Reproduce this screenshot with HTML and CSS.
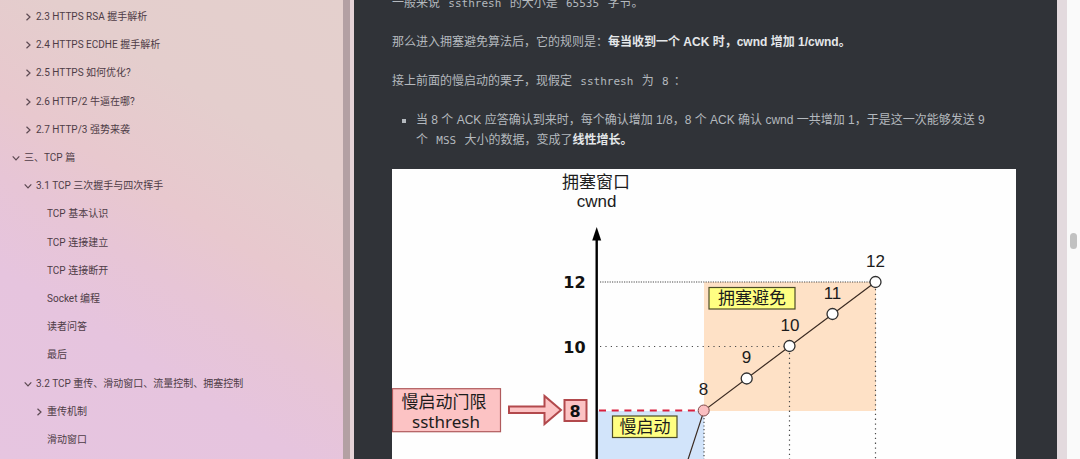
FILE: index.html
```html
<!DOCTYPE html>
<html lang="zh-CN">
<head>
<meta charset="utf-8">
<title>TCP 拥塞控制</title>
<link rel="stylesheet" href="styles.css">
</head>
<body>
<svg class="defs" aria-hidden="true">
  <symbol id="right" viewBox="0 0 8 8"><path d="M2.5 .7 6 4 2.5 7.3"/></symbol>
  <symbol id="down" viewBox="0 0 8 8"><path d="M.7 2.4 4 5.8 7.3 2.4"/></symbol>
</svg>
<div class="app">
  <nav class="outline" aria-label="目录">
    <ul class="tree">
      <li><a class="row l2" href="#"><svg class="chev"><use href="#right"/></svg>2.3 HTTPS RSA 握手解析</a></li>
      <li><a class="row l2" href="#"><svg class="chev"><use href="#right"/></svg>2.4 HTTPS ECDHE 握手解析</a></li>
      <li><a class="row l2" href="#"><svg class="chev"><use href="#right"/></svg>2.5 HTTPS 如何优化?</a></li>
      <li><a class="row l2" href="#"><svg class="chev"><use href="#right"/></svg>2.6 HTTP/2 牛逼在哪?</a></li>
      <li><a class="row l2" href="#"><svg class="chev"><use href="#right"/></svg>2.7 HTTP/3 强势来袭</a></li>
      <li><a class="row l1" href="#"><svg class="chev"><use href="#down"/></svg>三、TCP 篇</a></li>
      <li><a class="row l2" href="#"><svg class="chev"><use href="#down"/></svg>3.1 TCP 三次握手与四次挥手</a></li>
      <li><a class="row leaf" href="#">TCP 基本认识</a></li>
      <li><a class="row leaf" href="#">TCP 连接建立</a></li>
      <li><a class="row leaf" href="#">TCP 连接断开</a></li>
      <li><a class="row leaf" href="#">Socket 编程</a></li>
      <li><a class="row leaf" href="#">读者问答</a></li>
      <li><a class="row leaf" href="#">最后</a></li>
      <li><a class="row l2" href="#"><svg class="chev"><use href="#down"/></svg>3.2 TCP 重传、滑动窗口、流量控制、拥塞控制</a></li>
      <li><a class="row l3" href="#"><svg class="chev"><use href="#right"/></svg>重传机制</a></li>
      <li><a class="row leaf" href="#">滑动窗口</a></li>
    </ul>
  </nav>
  <div class="divider"></div>
  <main class="page">
    <article class="doc">
      <p>一般来说 <code>ssthresh</code> 的大小是 <code>65535</code> 字节。</p>
      <p>那么进入拥塞避免算法后，它的规则是：<strong>每当收到一个 ACK 时，cwnd 增加 1/cwnd。</strong></p>
      <p>接上前面的慢启动的栗子，现假定 <code>ssthresh</code> 为 <code>8</code>：</p>
      <ul class="points">
        <li>当 8 个 ACK 应答确认到来时，每个确认增加 1/8，8 个 ACK 确认 cwnd 一共增加 1，于是这一次能够发送 9 个 <code>MSS</code> 大小的数据，变成了<strong>线性增长。</strong></li>
      </ul>
      <svg class="chart" viewBox="392 169 624 310" role="img" aria-label="拥塞窗口变化">
        <rect class="paper" x="392" y="169" width="624" height="310"/>
        <rect class="avoid" x="704" y="282" width="172" height="129"/>
        <rect class="slow" x="598" y="411" width="106" height="68"/>
        <path class="dots dense" d="M600 282H870"/>
        <path class="dots wide" d="M600 346.500H784"/>
        <path class="dots" d="M704 418V479"/>
        <path class="dots tall" d="M789.500 353V479M875.500 289V479"/>
        <path class="limit" d="M599 410.500H699"/>
        <path class="axis" d="M596.700 479V238"/>
        <path class="head" d="M596.700 227 601.200 240.500H592.200Z"/>
        <path class="curve" d="M681 481 704 410.500 875.500 282"/>
        <circle class="start" cx="703.700" cy="410.500" r="5.500"/>
        <g class="dot">
          <circle cx="746.700" cy="378.500" r="5.500"/><circle cx="789.500" cy="346" r="5.500"/>
          <circle cx="832.500" cy="314" r="5.500"/><circle cx="875.500" cy="282" r="5.500"/>
        </g>
        <rect class="tag" x="709" y="287.500" width="86" height="21.500"/>
        <rect class="tag" x="612.500" y="416" width="64.500" height="21.500"/>
        <rect class="pink" x="392.500" y="388.700" width="108" height="43"/>
        <path class="arrow" d="M509 406.500H544.500V396L561 410 544.500 424V413H509Z"/>
        <rect class="arrow" x="564.500" y="400" width="22" height="21"/>
        <g class="label">
          <text x="596" y="188">拥塞窗口</text><text x="596.500" y="207">cwnd</text>
          <text x="752" y="304">拥塞避免</text><text x="645" y="433">慢启动</text>
          <text x="444" y="408">慢启动门限</text><text class="hand" x="446" y="428">ssthresh</text>
          <text x="703.500" y="395">8</text><text x="746.500" y="363">9</text>
          <text x="790" y="331">10</text><text x="832.500" y="299">11</text><text x="875.500" y="267">12</text>
        </g>
        <g class="label tick">
          <text x="574.500" y="288">12</text><text x="574.500" y="353">10</text><text x="575" y="417">8</text>
        </g>
      </svg>
    </article>
  </main>
  <div class="edge"></div>
  <div class="scroll"><div class="thumb"></div></div>
</div>
</body>
</html>
```

FILE: styles.css
```css
* { box-sizing: border-box; }

body {
  margin: 0;
  overflow: hidden;
  font-family: "Liberation Sans", "Noto Sans CJK SC", sans-serif;
}

.defs { display: none; }

.app {
  display: flex;
  height: 100vh;
}

.outline {
  flex: 0 0 343px;
  background: linear-gradient(212deg, #e4d0cd 0%, #e4cecd 27%, #e8c8ce 46%, #e7c5d6 58%, #e6c4de 72%, #e6c5e0 100%);
}

.tree {
  display: grid;
  grid-auto-rows: 1fr;
  height: 100%;
  margin: 0;
  padding: 3px 0 5px;
  list-style: none;
}

.row {
  display: flex;
  align-items: center;
  gap: 4px;
  height: 100%;
  font: 10px/20px Roboto, "Noto Sans CJK SC", sans-serif;
  color: #4e3c46;
  text-decoration: none;
  white-space: nowrap;
}

.l1 { padding-left: 12px; }
.l2 { padding-left: 24px; }
.l3 { padding-left: 35px; }
.leaf { padding-left: 47px; }

.chev {
  width: 8px;
  height: 8px;
  fill: none;
  stroke: #5d4a53;
  stroke-width: 1.200;
}

.divider {
  flex: 0 0 11px;
  background: #e5d3d7;
  border-left: 7px solid #b3a0a3;
}

.page {
  flex: 1;
  min-width: 0;
  overflow: hidden;
  background: #303338;
}

.doc {
  margin-top: -7px;
  padding: 0 41px 0 38px;
  font-size: 12px;
  line-height: 20px;
  color: #b4b9be;
}

.doc p { margin: 0 0 19px; }

.doc strong { color: #e4e7e9; }

.doc code {
  padding: 0 5px;
  font-family: "DejaVu Sans Mono", monospace;
  font-size: 11px;
  line-height: 1;
}

.points {
  margin: 0 0 19px;
  padding: 0 20px 0 24px;
  list-style: square;
}

.chart {
  display: block;
  width: 100%;
  height: auto;
}

.paper { fill: #fefefe; }
.avoid { fill: #fee1c6; }
.slow { fill: #d2e4fa; }

.dots {
  fill: none;
  stroke: #4a4a4a;
  stroke-width: 1.200;
  stroke-dasharray: 1.200 2.500;
}

.dense { stroke-dasharray: 1.200 1.200; }
.wide { stroke-dasharray: 1.200 4.200; }
.tall { stroke-dasharray: 1.300 3.500; }

.limit {
  stroke: #d91f3d;
  stroke-width: 2.200;
  stroke-dasharray: 7 5.700;
}

.axis { stroke: #000; stroke-width: 2.400; }
.head { fill: #000; }
.curve { fill: none; stroke: #3b2b22; stroke-width: 1.200; }
.start { fill: #fbbfc1; stroke: #7d4a4a; }
.dot { fill: #fff; stroke: #303030; stroke-width: 1.300; }
.tag { fill: #ffff82; stroke: #4c4c26; stroke-width: 1.200; }
.pink { fill: #fcc3c4; stroke: #b05a5c; stroke-width: 1.200; }
.arrow { fill: #fcc3c4; stroke: #b2494c; stroke-width: 2; }

.label {
  font-size: 17px;
  text-anchor: middle;
  fill: #1c1c1c;
}

.hand { font-family: "Noto Sans", sans-serif; }

.tick {
  font-family: "DejaVu Sans", sans-serif;
  font-size: 16px;
  font-weight: bold;
  fill: #111;
}

.edge {
  flex: 0 0 10px;
  background: #e3dade;
}

.scroll {
  display: flex;
  justify-content: center;
  flex: 0 0 13px;
  padding-top: 233px;
  background: #fafafa;
}

.thumb {
  width: 7px;
  height: 16px;
  border-radius: 4px;
  background: #c1c1c1;
}
```
